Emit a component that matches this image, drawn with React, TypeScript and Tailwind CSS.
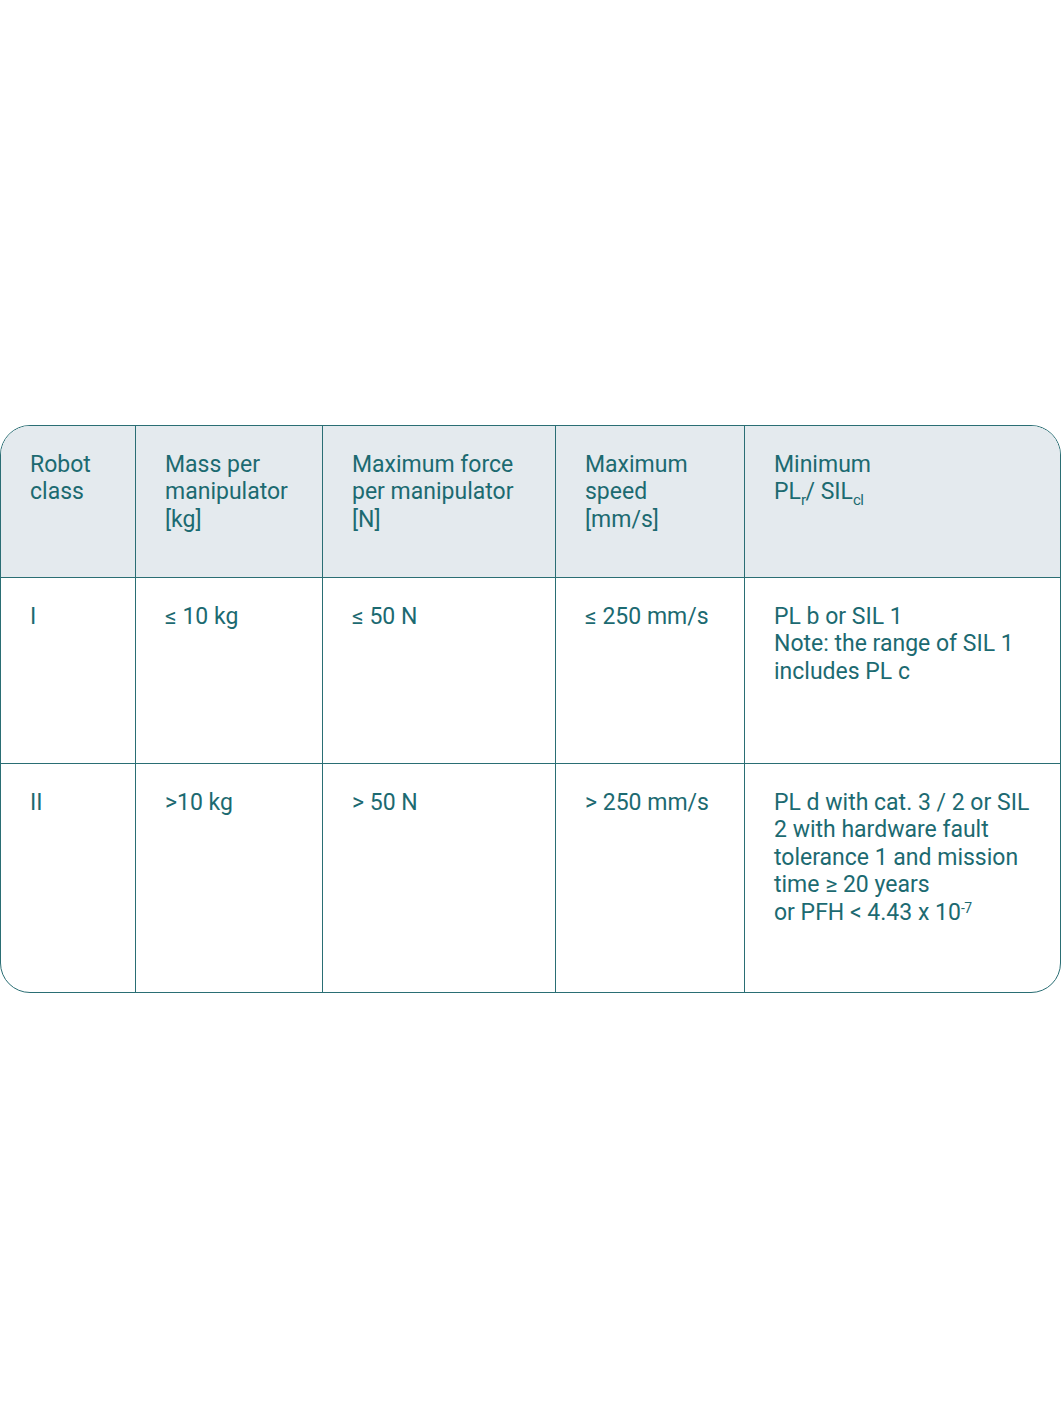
const cols = 'grid grid-cols-[135px_187px_233px_189px_1fr]'

function Cell({ children, last, bottom }: { children: React.ReactNode; last?: boolean; bottom?: boolean }) {
  return (
    <div
      className={
        'pl-[29px] pr-2 pt-[25px] ' +
        (last ? '' : 'border-r-[1.5px] border-[#2a6e74] ') +
        (bottom ? '' : 'border-b-[1.5px] border-[#2a6e74]')
      }
    >
      {children}
    </div>
  )
}

export default function App() {
  return (
    <div
      className="min-h-[1416px] w-[1062px] bg-white flex items-center text-[#1c6a71] text-[23px] leading-[27.5px] pt-[1px]"
      style={{ fontFamily: 'Roboto, "Liberation Sans", sans-serif' }}
    >
      <div className="w-[1061px] border-[1.5px] border-[#2a6e74] rounded-[30px] overflow-hidden">
        <div className={cols + ' h-[152px] bg-[#e4eaee]'}>
          <Cell>Robot<br />class</Cell>
          <Cell>Mass per<br />manipulator<br />[kg]</Cell>
          <Cell>Maximum force<br />per manipulator<br />[N]</Cell>
          <Cell>Maximum<br />speed<br />[mm/s]</Cell>
          <Cell last>
            Minimum<br />
            PL<sub className="text-[15px] bottom-[-6px] tracking-[-0.5px]">r</sub>/ SIL<sub className="text-[15px] bottom-[-6px] tracking-[-0.5px]">cl</sub>
          </Cell>
        </div>
        <div className={cols + ' h-[186px]'}>
          <Cell>I</Cell>
          <Cell>≤ 10 kg</Cell>
          <Cell>≤ 50 N</Cell>
          <Cell>≤ 250 mm/s</Cell>
          <Cell last>PL b or SIL 1<br />Note: the range of SIL 1<br />includes PL c</Cell>
        </div>
        <div className={cols + ' h-[228px]'}>
          <Cell bottom>II</Cell>
          <Cell bottom>&gt;10 kg</Cell>
          <Cell bottom>&gt; 50 N</Cell>
          <Cell bottom>&gt; 250 mm/s</Cell>
          <Cell last bottom>
            PL d with cat. 3 / 2 or SIL<br />2 with hardware fault<br />tolerance 1 and mission<br />time ≥ 20 years<br />
            or PFH &lt; 4.43 x 10<sup className="text-[14px] top-[-7px] tracking-[-0.5px]">-7</sup>
          </Cell>
        </div>
      </div>
    </div>
  )
}
